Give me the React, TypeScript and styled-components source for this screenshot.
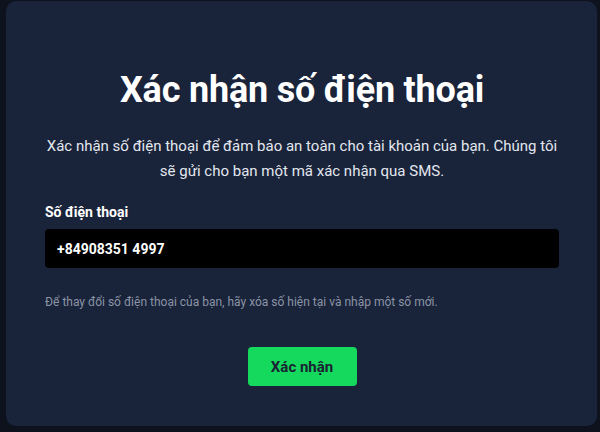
import React, { useState } from "react";
import styled, { createGlobalStyle } from "styled-components";

const GlobalStyle = createGlobalStyle`
  html, body {
    margin: 0;
    padding: 0;
    background: #0d121c;
    font-family: Roboto, "Noto Sans", "Liberation Sans", sans-serif;
  }
  * { box-sizing: border-box; }
`;

const Backdrop = styled.div`
  width: 600px;
  height: 432px;
  padding: 1px 3px 6px 6px;
  background: #0d121c;
`;

const Modal = styled.div`
  height: 100%;
  background: #19233a;
  border-radius: 10px;
  display: flex;
  flex-direction: column;
  padding: 68px 38px 0 39px;
`;

const Title = styled.h1`
  margin: 0;
  text-align: center;
  color: #ffffff;
  font-size: 36px;
  line-height: 42px;
  font-weight: 700;
  letter-spacing: -0.2px;
`;

const Description = styled.p`
  margin: 23px 0 0;
  text-align: center;
  color: #e3e7ee;
  font-size: 15px;
  line-height: 25px;
`;

const Label = styled.label`
  margin-top: 19px;
  color: #ffffff;
  font-size: 14px;
  font-weight: 700;
  line-height: 18px;
`;

const PhoneInput = styled.input`
  margin-top: 8px;
  width: 100%;
  height: 39px;
  border: none;
  border-radius: 4px;
  background: #000000;
  color: #ffffff;
  font-family: inherit;
  font-size: 14px;
  font-weight: 700;
  padding: 0 12px;
  outline: none;
`;

const Hint = styled.p`
  margin: 26px 0 0;
  color: #8b94a5;
  font-size: 12px;
  line-height: 16px;
`;

const Actions = styled.div`
  display: flex;
  justify-content: center;
  margin-top: 37px;
`;

const ConfirmButton = styled.button`
  width: 109px;
  height: 39px;
  border: none;
  border-radius: 4px;
  background: #14d95c;
  color: #1a2333;
  font-family: inherit;
  font-size: 15px;
  font-weight: 700;
  cursor: pointer;
`;

export default function App() {
  const [phone, setPhone] = useState("+84908351 4997");
  return (
    <>
      <GlobalStyle />
      <Backdrop>
        <Modal>
          <Title>Xác nhận số điện thoại</Title>
          <Description>
            Xác nhận số điện thoại để đảm bảo an toàn cho tài khoản của bạn. Chúng tôi
            sẽ gửi cho bạn một mã xác nhận qua SMS.
          </Description>
          <Label htmlFor="phone">Số điện thoại</Label>
          <PhoneInput
            id="phone"
            value={phone}
            onChange={(e) => setPhone(e.target.value)}
          />
          <Hint>
            Để thay đổi số điện thoại của bạn, hãy xóa số hiện tại và nhập một số mới.
          </Hint>
          <Actions>
            <ConfirmButton type="button">Xác nhận</ConfirmButton>
          </Actions>
        </Modal>
      </Backdrop>
    </>
  );
}
